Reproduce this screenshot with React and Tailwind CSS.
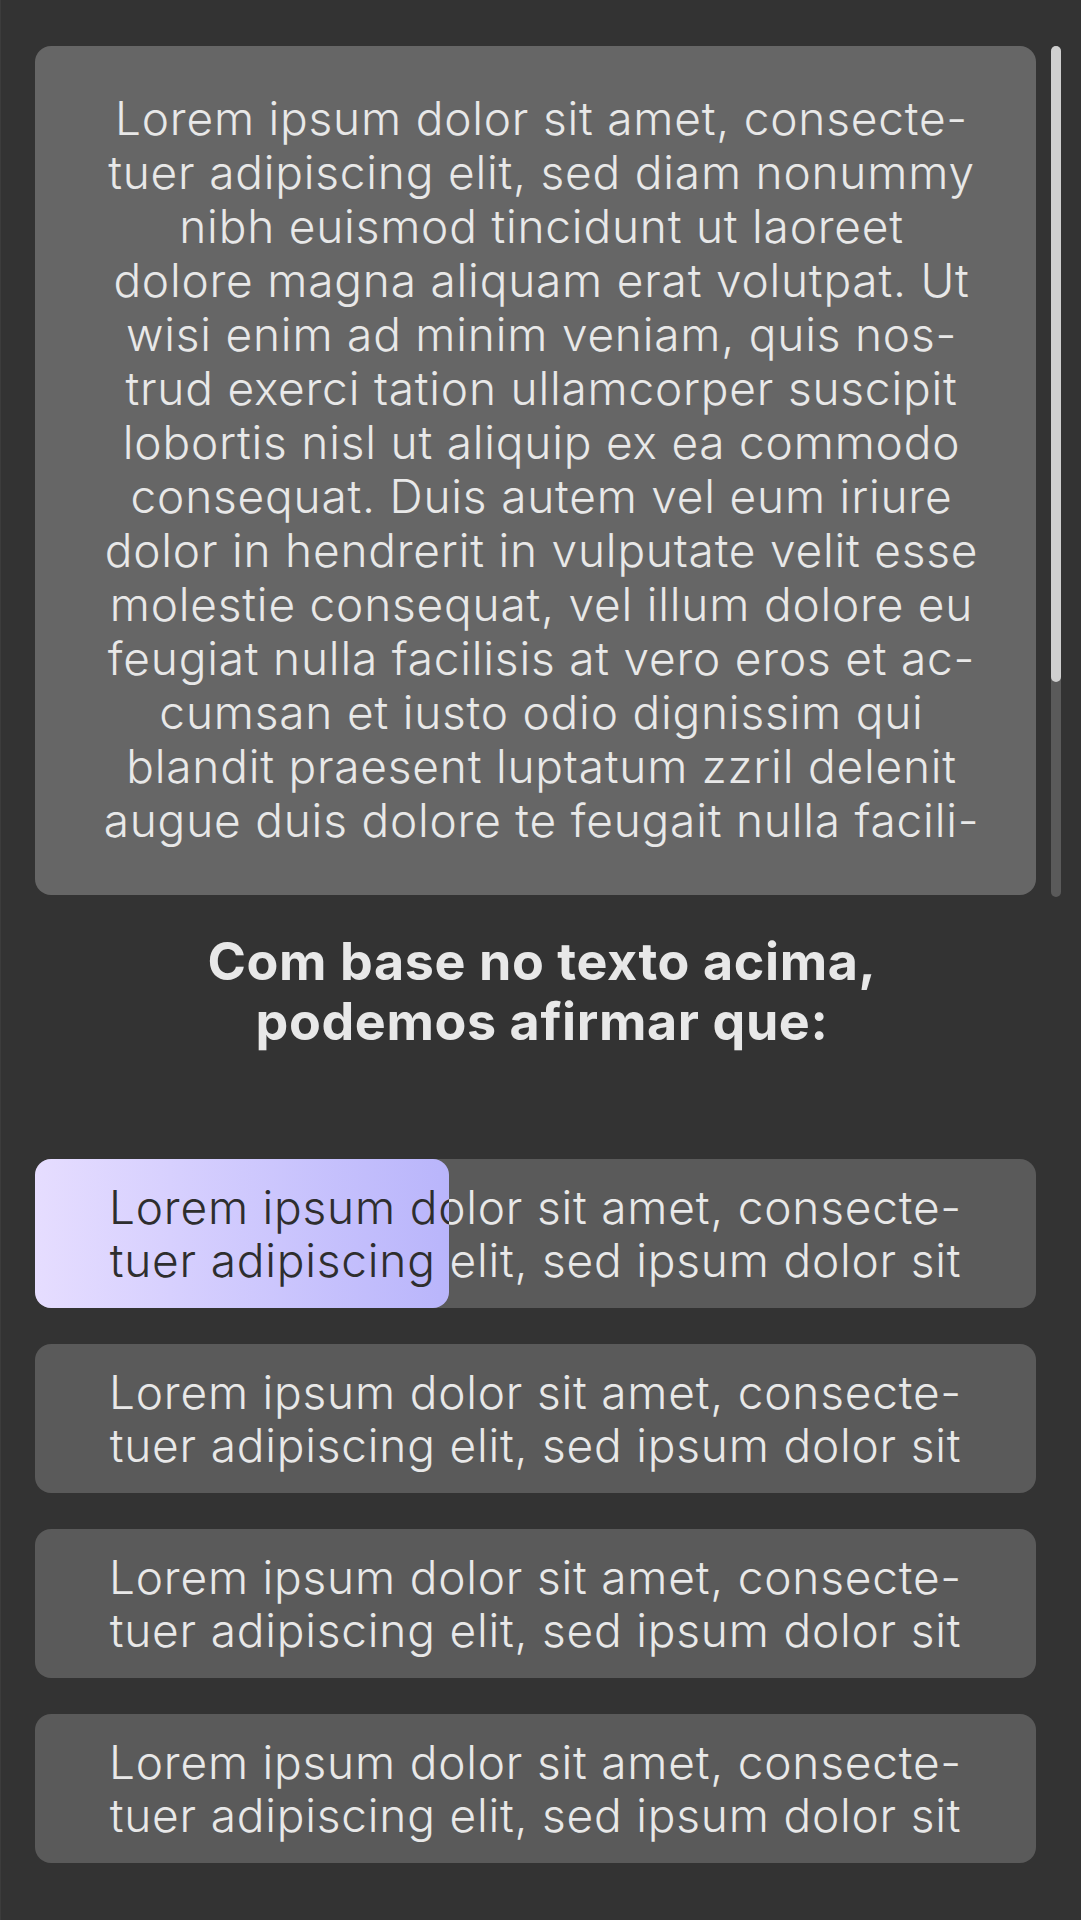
import React from "react";

const passage = [
  "Lorem ipsum dolor sit amet, consecte-",
  "tuer adipiscing elit, sed diam nonummy",
  "nibh euismod tincidunt ut laoreet",
  "dolore magna aliquam erat volutpat. Ut",
  "wisi enim ad minim veniam, quis nos-",
  "trud exerci tation ullamcorper suscipit",
  "lobortis nisl ut aliquip ex ea commodo",
  "consequat. Duis autem vel eum iriure",
  "dolor in hendrerit in vulputate velit esse",
  "molestie consequat, vel illum dolore eu",
  "feugiat nulla facilisis at vero eros et ac-",
  "cumsan et iusto odio dignissim qui",
  "blandit praesent luptatum zzril delenit",
  "augue duis dolore te feugait nulla facili-",
];

const optionLines = [
  "Lorem ipsum dolor sit amet, consecte-",
  "tuer adipiscing elit, sed ipsum dolor sit",
];

function OptionText({ dark }) {
  return (
    <div
      aria-hidden={dark ? "true" : undefined}
      className={`w-[1001px] h-full flex flex-col items-center justify-center text-center font-light text-[46px] leading-[53px] tracking-[0.8px] ${
        dark ? "text-[#2e2e2e]" : "text-[#e8e8e8]"
      }`}
    >
      {optionLines.map((l, i) => (
        <div key={i} className="whitespace-nowrap">
          {l}
        </div>
      ))}
    </div>
  );
}

function Option({ fill }) {
  return (
    <div className="relative w-[1001px] h-[149px] rounded-[16px] bg-[#5a5a5a]">
      <OptionText />
      {fill ? (
        <div className="absolute left-0 top-0 h-full w-[414px] overflow-hidden rounded-[16px] bg-gradient-to-r from-[#e6ddff] to-[#b9b5fb]">
          <OptionText dark />
        </div>
      ) : null}
    </div>
  );
}

export default function App() {
  return (
    <div
      className="min-h-screen bg-[#333333] border-l border-[#3c3c3c] pt-[46px] pl-[34px] pb-[59px]"
      style={{ fontFamily: "Inter, 'Noto Sans', 'DejaVu Sans', sans-serif" }}
    >
      <div className="flex gap-[15px] items-start">
        <div className="w-[1001px] h-[849px] rounded-[16px] bg-[#666666] pt-[45px] pl-[12px] text-center font-light text-[46px] leading-[54px] tracking-[0.8px] text-[#e8e8e8]">
          {passage.map((l, i) => (
            <div key={i} className="whitespace-nowrap">
              {l}
            </div>
          ))}
        </div>
        <div className="w-[10px] h-[851px] rounded-full bg-[#5a5a5a]">
          <div className="h-[636px] rounded-full bg-[#cfcfcf]" />
        </div>
      </div>

      <h2 className="w-[1001px] mt-[35px] pl-[13px] text-center font-bold text-[52px] leading-[60px] tracking-[0.6px] text-[#e8e8e8]">
        Com base no texto acima,
        <br />
        podemos afirmar que:
      </h2>

      <div className="mt-[107px] flex flex-col gap-[36px]">
        <Option fill />
        <Option />
        <Option />
        <Option />
      </div>
    </div>
  );
}
